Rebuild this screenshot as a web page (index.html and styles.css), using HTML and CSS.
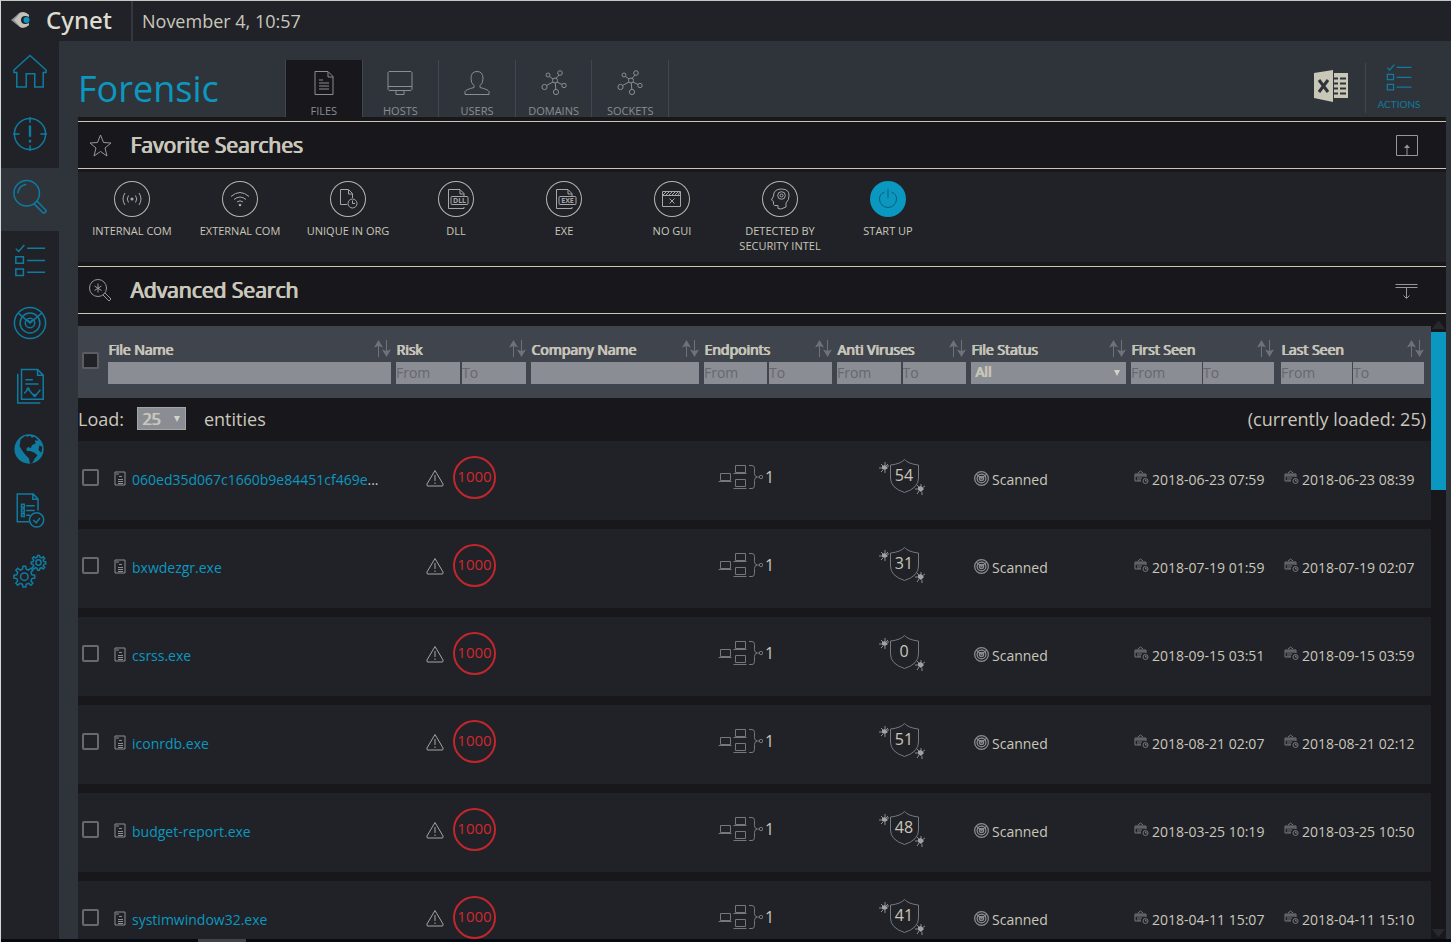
FILE: index.html
```html
<!DOCTYPE html>
<html lang="en">
<head>
<meta charset="utf-8">
<title>Cynet - Forensic</title>
<link rel="stylesheet" href="styles.css">
</head>
<body>
<svg class="defs" aria-hidden="true">
  <symbol id="file" viewBox="0 0 12 15"><path d="M1 1h10v13H1z"/><path d="M2 3h3M5 5.500h3M4 8.500h5M4 10.500h5M4 12.500h5"/></symbol>
  <symbol id="warn" viewBox="0 0 18 18"><path d="M9 1.500 17 15q.6 2-1 2H2q-1.600 0-1-2z"/><path d="M9 6v6M9 13.500v1.500"/></symbol>
  <symbol id="hosts" viewBox="0 0 46 26"><path d="M2.500 9.500h10v7h-10zM.5 17.500h13M17.500 1.500h10v7h-10zM15.500 9.500h13M17.500 15.500h10v7h-10zM15.500 24.500h13"/><path d="M31 1.500h3q2.500 0 2.500 3v5q0 3 2.500 3.500q-2.500.5-2.500 3.500v5q0 3-2.500 3h-3M39 13h2"/><circle cx="43" cy="13" r="1.700"/></symbol>
  <symbol id="shield" viewBox="0 0 46 38"><path d="M25.500 1.500q4 4.500 14 5.500v13q0 10-14 14.500q-14-4.500-14-14.500V7q10-1 14-5.500z"/><path class="bug" d="M3 8l3-1 3 3-3 2-3-1z"/><path class="legs" d="M0 10h3M2 6l2 2M6 4v3M9 6 7 8M2 14l2-2M6 15v-3M8 8h2"/><path class="bug" d="M39 29l3-1 3 3-3 3-3-2z"/><path class="legs" d="M36 31h3M38 27l2 2M42 26v3M46 28l-3 2M38 36l2-3M43 37v-3"/></symbol>
  <symbol id="radar" viewBox="0 0 36 36"><circle cx="18" cy="18" r="16.500"/><circle cx="18" cy="18" r="10.500"/><circle cx="18" cy="18" r="5"/><path d="M5.500 7.500 18 18 30.500 7.500M16 15l2 3 2-3"/></symbol>
  <symbol id="cal" viewBox="0 0 15 15"><path d="M1 4h11v3M1 4v7h6M1 6h11M4 3l2.500-2L9 3M3 8h5M3 10h4M2 5h9"/><circle cx="11.500" cy="11" r="2.500"/><path d="M11.500 9.500V11h1.500"/></symbol>
  <symbol id="sort" viewBox="0 0 17 17"><path d="M4.500 17V3M12.500 0v13"/><path class="head" d="M4.500 0 9 7.500 4.500 6 0 7.500zM12.500 17 8 9.500l4.500 1.500 4.500-1.500z"/></symbol>
  <symbol id="list" viewBox="0 0 36 36"><path d="M3 6l3 3 6-7M15 5.500h19M3 14.500h8v7H3zM15 18.500h19M3 27.500h8v7H3zM15 31h19"/></symbol>
  <symbol id="net" viewBox="0 0 26 26"><circle cx="14" cy="10.500" r="2.500"/><circle cx="7" cy="5" r="2"/><circle cx="19" cy="3" r="2.300"/><circle cx="3.500" cy="17" r="2.600"/><circle cx="15" cy="22" r="2.600"/><circle cx="23" cy="15.500" r="2.200"/><path d="m8.500 6.500 3.500 2.500M15 8.500 18 5M12 12l-6.500 3.500M14.300 13l.5 6.500M16 12l5 2.500"/></symbol>
</svg>

<div class="app">
  <header class="topbar">
    <div class="brand">
      <svg class="brand-mark" viewBox="0 0 20 18" aria-hidden="true"><path fill="#8f9091" d="M0 9Q5 5 8 2q5-3 10 2-5-1-8 1-3 4 0 8 3 2 8 1-4 4-9 2Q6 14 0 9z"/><path fill="#c3c1ba" d="M3 9q3-3 6-7 5-2 9 2v2q-4-2-7 0-2 3 0 6 3 2 7 0v2q-5 4-9 2-3-4-6-7z"/><circle cx="15.500" cy="9" r="3" fill="#0b98c0"/></svg>
      <span class="brand-name">Cynet</span>
    </div>
    <time class="clock">November 4, 10:57</time>
  </header>

  <div class="body">
    <nav class="sidebar" aria-label="Main">
      <a href="#" aria-label="Home"><svg viewBox="0 0 36 36"><path d="M1 17 18 1.500 35 17v2.500h-3V35h-9V21h-9v14H4V19.500H1z"/></svg></a>
      <a href="#" aria-label="Alerts"><svg viewBox="0 0 36 36"><circle cx="18" cy="18" r="16.500"/><path d="M18 0v6M18 30v6M0 18h7M29 18h7"/><path class="thick" d="M18 9v12M18 24v3"/></svg></a>
      <a href="#" class="active" aria-label="Forensic"><svg viewBox="0 0 36 36"><circle cx="14.500" cy="14" r="13.500"/><path d="M5 14q1-8 9-9.500M22 25l10 10q3 0 3-3L25 22"/></svg></a>
      <a href="#" aria-label="Tasks"><svg><use href="#list"/></svg></a>
      <a href="#" aria-label="Scan"><svg><use href="#radar"/></svg></a>
      <a href="#" aria-label="Reports"><svg viewBox="0 0 36 36"><path d="M9 .5h17l6 6V32H9zM26 .5v6h6M5 5v31h24M13 11.500h8M13 16h14M12 26l4-5 5 6 3 1 5-6"/><circle cx="16" cy="21" r="1"/><circle cx="23" cy="28" r="1"/></svg></a>
      <a href="#" class="compact" aria-label="Network"><svg viewBox="0 0 36 36"><circle class="fill" cx="17" cy="18" r="15.500"/><path class="land" d="M8 8l5-4 2 1 3-1 2 2 3-1 4 4-4 0 1 3-4 2-1 3-3-1-2 2 1 2 3 0 5 2 3 3-3 3-2 4-3 2-1-6-4-4-3-4-3-5zM28 14l3 2-1 6-3-3z"/></svg></a>
      <a href="#" class="compact" aria-label="Policies"><svg viewBox="0 0 36 36"><path d="M17 30.500H4.500V1h17l5 5.500v12M21 1.500v5h5M9 12h3v3H9zM9 17h3v3H9zM9 22h3v3H9zM14 13.500h9M14 18.500h9M14 23.500h4"/><circle cx="25" cy="28.500" r="7.500"/><path d="m21.500 28.500 3 3 4-5"/></svg></a>
      <a href="#" aria-label="Settings"><svg viewBox="0 0 36 36"><circle cx="12" cy="24" r="4"/><path d="M10.500 13h3l.5 3 2.500 1 2.500-2 2 2-2 2.500 1 2.500 3 .5v3l-3 .5-1 2.500 2 2.500-2 2-2.500-2-2.500 1-.5 3h-3l-.5-3-2.500-1L5 33l-2-2 2-2.500L4 26l-3-.5v-3l3-.5 1-2.500L3 17l2-2 2.500 2 2.500-1z"/><circle cx="27" cy="9" r="2.800"/><path d="M26 1.500h2l.5 2 1.800.7L32 3l1.500 1.500L32 6.500l.7 1.500 2 .5v2l-2 .5-.7 1.500 1.500 1.800L32 15.800l-1.800-1.300-1.700.7-.5 2h-2l-.5-2-1.700-.7-1.800 1.300-1.500-1.500 1.500-1.800-.7-1.500-2-.5v-2l2-.5.7-1.500-1.500-2L22 3l1.800 1.200 1.700-.7z"/></svg></a>
    </nav>

    <main class="content">
      <div class="page-head">
        <h1>Forensic</h1>
        <nav class="tabs" aria-label="Entity type">
          <a href="#" class="on"><svg viewBox="0 0 26 26"><path d="M4 1.500h13l5 5V24.500H4zM17 2v5h5M8 10h4M8 13h10M8 16h10M8 19h10"/></svg>FILES</a>
          <a href="#"><svg viewBox="0 0 26 26"><path d="M2 1.500h22l1 1v17l-1 1H2l-1-1v-17zM1 16.500h24M9 21v3.500h8V21"/></svg>HOSTS</a>
          <a href="#"><svg viewBox="0 0 26 26"><path d="M13 1.500q6 0 6 7 0 5-3 7v2q8 2 9 4v3H1v-3q1-2 9-4v-2q-3-2-3-7 0-7 6-7z"/></svg>USERS</a>
          <a href="#"><svg><use href="#net"/></svg>DOMAINS</a>
          <a href="#"><svg><use href="#net"/></svg>SOCKETS</a>
        </nav>
        <div class="head-tools">
          <button class="excel" aria-label="Export to Excel"><svg viewBox="0 0 34 34"><path fill="#c9c7b8" d="M0 4 19 1v32L0 29z"/><path fill="#c9c7b8" d="M20 4h14v25H20z"/><path stroke="#2f343b" stroke-width="2" d="M20 9.500h4M26 9.500h6M20 14.500h4M26 14.500h6M20 19.500h4M26 19.500h6M20 24.500h4M26 24.500h6"/><path stroke="#2f343b" stroke-width="3" d="m5 11 9 12M14 11 5 23"/></svg></button>
          <button class="actions"><svg><use href="#list"/></svg>ACTIONS</button>
        </div>
      </div>

      <div class="panel">
        <section>
          <div class="bar">
            <svg viewBox="0 0 23 23"><path d="m11.500 1 3 7.500 7.500.5-6 5 2 8-6.500-4.500L5 22l2-8-6-5 7.500-.5z"/></svg>
            <h2>Favorite Searches</h2>
            <button aria-label="Collapse favorites"><svg viewBox="0 0 23 23"><path d="M1.500 1.500h21v20h-21zM12 21v-9"/><path class="head" d="M12 10.500l3 3.500H9z"/></svg></button>
          </div>
          <div class="favorites">
            <button><span class="disc"><svg viewBox="0 0 36 36"><circle class="dot" cx="18" cy="18" r="1.500"/><path d="M14.500 14.500q-2.500 3.500 0 7M21.500 14.500q2.500 3.500 0 7M11 12q-4 6 0 12M25 12q4 6 0 12"/></svg></span>INTERNAL COM</button>
            <button><span class="disc"><svg viewBox="0 0 36 36"><path d="M9 15.500q9-8 18 0M12 18.500q6-5 12 0M15 21q3-2.500 6 0"/><circle class="dot" cx="18" cy="24" r="1.300"/></svg></span>EXTERNAL COM</button>
            <button><span class="disc"><svg viewBox="0 0 36 36"><path d="M17 23.500h-6.500v-15h8l4 4V17M18.500 9v4h4"/><circle cx="22.500" cy="22.500" r="4.500"/><path d="M22.500 19.500v3H25"/></svg></span>UNIQUE IN ORG</button>
            <button><span class="disc"><svg viewBox="0 0 36 36"><path d="M26 26v1.500H10.500v-19H22l4 4V15M22 9v4h4"/><rect x="13" y="15.500" width="17" height="8" rx="1"/><text x="21.500" y="22">DLL</text></svg></span>DLL</button>
            <button><span class="disc"><svg viewBox="0 0 36 36"><path d="M26 26v1.500H10.500v-19H22l4 4V15M22 9v4h4"/><rect x="13" y="15.500" width="17" height="8" rx="1"/><text x="21.500" y="22">EXE</text></svg></span>EXE</button>
            <button><span class="disc"><svg viewBox="0 0 36 36"><path d="M8.500 10.500h18v15h-18zM8.500 14.500h18M9 14l3-3M12 14l3-3M15 14l3-3M18 14l3-3M21 14l3-3M24 14l2-3M15.500 17.500l5 5M20.500 17.500l-5 5"/></svg></span>NO GUI</button>
            <button><span class="disc"><svg viewBox="0 0 36 36"><path d="M16 27.500v-3h-3.500q-1.500 0-1-4L9.500 19l2-4q0-7 8-7t7.500 7q0 4-3 7v4l-5 2z"/><circle cx="19.500" cy="14.500" r="3.800"/><circle cx="19.500" cy="14.500" r="1.500"/></svg></span>DETECTED BY SECURITY INTEL</button>
            <button class="selected"><span class="disc"><svg viewBox="0 0 36 36"><path d="M18 8v9M14.500 11q-5 2-5 7a8.500 8.500 0 0 0 17 0q0-5-5-7"/></svg></span>START UP</button>
          </div>
        </section>

        <section>
          <div class="bar">
            <svg viewBox="0 0 23 23"><circle cx="9" cy="9" r="8.500"/><path d="M9 4.500v9M5.500 7l7 4.500M12.500 7l-7 4.500M14 16l6 6 2-2-6-6"/></svg>
            <h2>Advanced Search</h2>
            <button aria-label="Expand advanced search"><svg viewBox="0 0 23 23"><path d="M.5 5.500h22M.5 8.500h22M11.500 9v10M8.500 16.500l3 3 3-3"/></svg></button>
          </div>
        </section>

        <div class="results">
          <div class="grid-wrap">
          <table>
            <colgroup><col class="c-check"><col class="c-name"><col class="c-risk"><col class="c-company"><col class="c-end"><col class="c-anti"><col class="c-status"><col class="c-date"><col class="c-date"></colgroup>
            <thead>
              <tr>
                <th class="check"><input type="checkbox" aria-label="Select all"></th>
                <th><div class="label">File Name<svg><use href="#sort"/></svg></div><div class="filter"><input aria-label="File Name"></div></th>
                <th><div class="label">Risk<svg><use href="#sort"/></svg></div><div class="filter"><input placeholder="From" aria-label="Risk from"><input placeholder="To" aria-label="Risk to"></div></th>
                <th><div class="label">Company Name<svg><use href="#sort"/></svg></div><div class="filter"><input aria-label="Company Name"></div></th>
                <th><div class="label">Endpoints<svg><use href="#sort"/></svg></div><div class="filter"><input placeholder="From" aria-label="Endpoints from"><input placeholder="To" aria-label="Endpoints to"></div></th>
                <th><div class="label">Anti Viruses<svg><use href="#sort"/></svg></div><div class="filter"><input placeholder="From" aria-label="Anti Viruses from"><input placeholder="To" aria-label="Anti Viruses to"></div></th>
                <th><div class="label">File Status<svg><use href="#sort"/></svg></div><div class="filter pick"><select aria-label="File Status"><option>All</option></select></div></th>
                <th class="date"><div class="label">First Seen<svg><use href="#sort"/></svg></div><div class="filter"><input placeholder="From" aria-label="First Seen from"><input placeholder="To" aria-label="First Seen to"></div></th>
                <th class="date"><div class="label">Last Seen<svg><use href="#sort"/></svg></div><div class="filter"><input placeholder="From" aria-label="Last Seen from"><input placeholder="To" aria-label="Last Seen to"></div></th>
              </tr>
              <tr class="load">
                <td colspan="9"><div class="load-row"><label for="count">Load:</label><span class="pick"><select id="count"><option>25</option></select></span><span>entities</span><span class="loaded">(currently loaded: 25)</span></div></td>
              </tr>
            </thead>
            <tbody>
              <tr><td class="check"><input type="checkbox" aria-label="Select row"></td><td class="text name"><div class="item"><svg class="i-file"><use href="#file"/></svg><span><a href="#">060ed35d067c1660b9e84451cf469e</a>...</span></div></td><td><div class="risk"><svg><use href="#warn"/></svg><span>1000</span></div></td><td></td><td class="lift"><div class="hosts"><svg><use href="#hosts"/></svg>1</div></td><td class="lift"><div class="shield"><svg><use href="#shield"/></svg><span>54</span></div></td><td class="text"><div class="item"><svg class="i-radar"><use href="#radar"/></svg>Scanned</div></td><td class="text"><div class="item"><svg class="i-cal"><use href="#cal"/></svg>2018-06-23 07:59</div></td><td class="text"><div class="item"><svg class="i-cal"><use href="#cal"/></svg>2018-06-23 08:39</div></td></tr>
              <tr><td class="check"><input type="checkbox" aria-label="Select row"></td><td class="text name"><div class="item"><svg class="i-file"><use href="#file"/></svg><a href="#">bxwdezgr.exe</a></div></td><td><div class="risk"><svg><use href="#warn"/></svg><span>1000</span></div></td><td></td><td class="lift"><div class="hosts"><svg><use href="#hosts"/></svg>1</div></td><td class="lift"><div class="shield"><svg><use href="#shield"/></svg><span>31</span></div></td><td class="text"><div class="item"><svg class="i-radar"><use href="#radar"/></svg>Scanned</div></td><td class="text"><div class="item"><svg class="i-cal"><use href="#cal"/></svg>2018-07-19 01:59</div></td><td class="text"><div class="item"><svg class="i-cal"><use href="#cal"/></svg>2018-07-19 02:07</div></td></tr>
              <tr><td class="check"><input type="checkbox" aria-label="Select row"></td><td class="text name"><div class="item"><svg class="i-file"><use href="#file"/></svg><a href="#">csrss.exe</a></div></td><td><div class="risk"><svg><use href="#warn"/></svg><span>1000</span></div></td><td></td><td class="lift"><div class="hosts"><svg><use href="#hosts"/></svg>1</div></td><td class="lift"><div class="shield"><svg><use href="#shield"/></svg><span>0</span></div></td><td class="text"><div class="item"><svg class="i-radar"><use href="#radar"/></svg>Scanned</div></td><td class="text"><div class="item"><svg class="i-cal"><use href="#cal"/></svg>2018-09-15 03:51</div></td><td class="text"><div class="item"><svg class="i-cal"><use href="#cal"/></svg>2018-09-15 03:59</div></td></tr>
              <tr><td class="check"><input type="checkbox" aria-label="Select row"></td><td class="text name"><div class="item"><svg class="i-file"><use href="#file"/></svg><a href="#">iconrdb.exe</a></div></td><td><div class="risk"><svg><use href="#warn"/></svg><span>1000</span></div></td><td></td><td class="lift"><div class="hosts"><svg><use href="#hosts"/></svg>1</div></td><td class="lift"><div class="shield"><svg><use href="#shield"/></svg><span>51</span></div></td><td class="text"><div class="item"><svg class="i-radar"><use href="#radar"/></svg>Scanned</div></td><td class="text"><div class="item"><svg class="i-cal"><use href="#cal"/></svg>2018-08-21 02:07</div></td><td class="text"><div class="item"><svg class="i-cal"><use href="#cal"/></svg>2018-08-21 02:12</div></td></tr>
              <tr><td class="check"><input type="checkbox" aria-label="Select row"></td><td class="text name"><div class="item"><svg class="i-file"><use href="#file"/></svg><a href="#">budget-report.exe</a></div></td><td><div class="risk"><svg><use href="#warn"/></svg><span>1000</span></div></td><td></td><td class="lift"><div class="hosts"><svg><use href="#hosts"/></svg>1</div></td><td class="lift"><div class="shield"><svg><use href="#shield"/></svg><span>48</span></div></td><td class="text"><div class="item"><svg class="i-radar"><use href="#radar"/></svg>Scanned</div></td><td class="text"><div class="item"><svg class="i-cal"><use href="#cal"/></svg>2018-03-25 10:19</div></td><td class="text"><div class="item"><svg class="i-cal"><use href="#cal"/></svg>2018-03-25 10:50</div></td></tr>
              <tr><td class="check"><input type="checkbox" aria-label="Select row"></td><td class="text name"><div class="item"><svg class="i-file"><use href="#file"/></svg><a href="#">systimwindow32.exe</a></div></td><td><div class="risk"><svg><use href="#warn"/></svg><span>1000</span></div></td><td></td><td class="lift"><div class="hosts"><svg><use href="#hosts"/></svg>1</div></td><td class="lift"><div class="shield"><svg><use href="#shield"/></svg><span>41</span></div></td><td class="text"><div class="item"><svg class="i-radar"><use href="#radar"/></svg>Scanned</div></td><td class="text"><div class="item"><svg class="i-cal"><use href="#cal"/></svg>2018-04-11 15:07</div></td><td class="text"><div class="item"><svg class="i-cal"><use href="#cal"/></svg>2018-04-11 15:10</div></td></tr>
            </tbody>
          </table>
          </div>
          <div class="scroll" aria-hidden="true"><i class="up"></i><i class="thumb"></i><i class="down"></i></div>
        </div>
      </div>
    </main>
  </div>
  <div class="dock"><i></i></div>
</div>
</body>
</html>
```

FILE: styles.css
```css
:root {
  --bg: #2f343b;
  --surface: #212227;
  --dark: #18171c;
  --text: #c9c7bb;
  --line: #c9c5b0;
  --blue: #0b98c0;
  --blue-dim: #0f7ba0;
  --gray: #8a8d92;
  --field: #8a8d94;
}
* { box-sizing: border-box; }
body {
  margin: 0;
  background: var(--bg);
  color: var(--text);
  font: 14px/20px "Open Sans", "Noto Sans", sans-serif;
}
a { color: inherit; text-decoration: none; }
button {
  padding: 0;
  border: 0;
  background: none;
  color: inherit;
  font: inherit;
}
svg { display: block; flex: none; fill: none; stroke: currentColor; overflow: visible; }
.defs { position: absolute; width: 0; height: 0; }

.app {
  display: flex;
  flex-direction: column;
  height: 100vh;
  overflow: hidden;
  border-top: 1px solid #c5c8c2;
  border-left: 1px solid #d5d8d8;
}
.topbar {
  display: flex;
  flex: none;
  height: 40px;
  align-items: stretch;
  background: var(--surface);
}
.brand {
  display: flex;
  align-items: center;
  gap: 15px;
  width: 132px;
  padding: 0 0 2px 10px;
  border-right: 2px solid #343940;
}
.brand-mark { width: 20px; height: 18px; stroke: none; }
.brand-name { color: #dddbd2; font: 500 24px/36px "Noto Sans", sans-serif; }
.clock { padding-left: 9px; font-size: 18px; line-height: 40px; }

.body { display: flex; flex: 1; min-height: 0; }
.sidebar {
  display: flex;
  flex: none;
  flex-direction: column;
  width: 58px;
  padding-top: 1px;
  background: var(--surface);
  color: var(--blue-dim);
}
.sidebar a {
  display: flex;
  justify-content: center;
  height: 63px;
  padding-top: 12px;
}
.sidebar a.active { background: var(--bg); }
.sidebar a.compact { height: 61px; }
.sidebar svg { width: 34px; height: 34px; stroke-width: 1.6; }
.sidebar .thick { stroke-width: 2.5; }
.sidebar .fill { fill: currentColor; stroke: none; }
.sidebar .land { fill: var(--surface); stroke: none; }

.content {
  display: flex;
  flex: 1;
  flex-direction: column;
  min-width: 0;
  padding: 0 5px 0 19px;
}
.page-head { display: flex; flex: none; height: 76px; align-items: flex-end; }
h1 {
  width: 207px;
  margin: 0;
  color: var(--blue);
  font-size: 36px;
  font-weight: 400;
  line-height: 56px;
}
.tabs {
  display: grid;
  grid-template-columns: repeat(5, 1fr);
  width: 384px;
  height: 57px;
  border-left: 1px solid #42474f;
  color: var(--gray);
}
.tabs a {
  display: flex;
  flex-direction: column;
  align-items: center;
  gap: 7px;
  padding-top: 10px;
  border-right: 1px solid #42474f;
  font-size: 11px;
  line-height: 15px;
}
.tabs a.on { background: var(--dark); }
.tabs svg { width: 26px; height: 26px; }
.head-tools { display: flex; align-items: center; margin-left: auto; padding-bottom: 4px; }
.excel { padding: 0 17px 4px 0; }
.excel svg { width: 34px; height: 34px; stroke: none; }
.actions {
  display: flex;
  flex-direction: column;
  align-items: center;
  gap: 7px;
  width: 81px;
  height: 50px;
  padding-right: 14px;
  border-left: 1px solid #42474f;
  color: var(--blue-dim);
  font: 10px/12px Lato, sans-serif;
}
.actions svg { width: 28px; height: 28px; stroke-width: 1.6; }

.panel {
  display: flex;
  flex: 1;
  flex-direction: column;
  min-height: 0;
  padding-top: 4px;
  background: var(--dark);
}
.bar {
  display: flex;
  align-items: center;
  gap: 18px;
  height: 48px;
  padding: 0 28px 0 11px;
  border-top: 1px solid var(--line);
  border-bottom: 1px solid var(--line);
}
.bar svg { width: 23px; height: 23px; color: #96979a; }
h2 {
  margin: 0;
  font-size: 21px;
  font-weight: 400;
  line-height: 30px;
  text-shadow: 1px 0 currentColor, 1px 0 currentColor;
}
.bar button { margin-left: auto; }
.favorites {
  display: flex;
  height: 90px;
  margin: 3px 0 4px;
  padding-top: 9px;
  background: var(--surface);
}
.favorites button {
  display: flex;
  flex-direction: column;
  align-items: center;
  width: 108px;
  padding: 0 12px;
  font-size: 11px;
  line-height: 15px;
}
.disc {
  width: 36px;
  height: 36px;
  margin-bottom: 6px;
  border-radius: 50%;
  box-shadow: inset 0 0 0 1px #b5b5af;
  color: #a5a7a8;
}
.disc svg { width: 36px; height: 36px; }
.disc .dot { fill: currentColor; stroke: none; }
.disc text { fill: currentColor; stroke: none; font: 700 7px "Open Sans", sans-serif; text-anchor: middle; }
.selected .disc { background: var(--blue); box-shadow: none; color: #0a5f7c; }

.results { display: flex; flex: 1; min-height: 0; }
.grid-wrap { flex: 1; min-width: 0; padding-top: 12px; overflow: hidden; }
table { width: 100%; table-layout: fixed; border-collapse: separate; border-spacing: 0; }
.c-check { width: 30px; }
.c-name { width: 288px; }
.c-risk { width: 135px; }
.c-company { width: 173px; }
.c-end { width: 133px; }
.c-anti { width: 134px; }
.c-status { width: 160px; }
.c-date { width: 150px; }
th {
  height: 72px;
  padding: 0 5px 2px 0;
  background: #3f444d;
  font-weight: 400;
  text-align: left;
}
th.date { padding-right: 7px; }
th.check, td.check { padding-left: 4px; padding-right: 0; }
.label {
  display: flex;
  justify-content: space-between;
  height: 24px;
  line-height: 24px;
  text-shadow: 1px 0 currentColor, 1px 0 currentColor;
}
.label svg { width: 17px; height: 17px; margin-top: 2px; color: #6f7278; }
.head { fill: currentColor; stroke: none; }
.filter { display: flex; gap: 2px; }
.date .filter { gap: 1px; }
.filter input, .filter select {
  flex: 1;
  min-width: 0;
  width: 0;
  height: 22px;
  padding: 0 0 2px;
  border: 0;
  border-radius: 0;
  background: var(--field);
  color: var(--text);
  font: 14px/20px "Open Sans", sans-serif;
}
.filter input::placeholder { color: #66686c; opacity: 1; }
.pick { position: relative; }
.pick select { appearance: none; text-shadow: 1px 0 currentColor, 1px 0 currentColor; }
.filter select { padding-left: 4px; }
.pick::after {
  content: "";
  position: absolute;
  top: 50%;
  right: 6px;
  margin-top: -3px;
  border: 3px solid transparent;
  border-top: 6px solid #d5d3c8;
  border-bottom: 0;
}
input[type="checkbox"] {
  display: block;
  appearance: none;
  width: 17px;
  height: 17px;
  margin: 0;
  border: 2px solid #66696e;
  border-radius: 2px;
  background: var(--surface);
}
th input[type="checkbox"] { border-color: #5b5d62; }
th.check { padding-bottom: 4px; }
.load td { height: 43px; padding: 0 5px 2px 0; border: 0; background: none; }
.load-row { display: flex; align-items: center; font-size: 18px; line-height: 24px; }
.load-row .pick { margin: 0 18px 0 13px; }
.load-row select {
  display: block;
  width: 49px;
  height: 23px;
  padding: 0 4px;
  border: 1px solid #a3a5a3;
  border-radius: 0;
  background: var(--field);
  color: var(--text);
  font: 16px/20px "Open Sans", sans-serif;
}
.loaded { margin-left: auto; }

td {
  height: 88px;
  padding: 0 5px 6px 0;
  border-bottom: 9px solid var(--dark);
  background: var(--surface);
}
td.lift { padding-bottom: 8px; }
td.text { padding: 0 0 2px 3px; }
td.name { padding-left: 6px; }
.item { display: flex; align-items: center; gap: 3px; white-space: nowrap; }
.name .item { gap: 6px; }
.item a { color: var(--blue); }
.item svg { margin-bottom: 2px; color: var(--gray); }
.i-file { width: 12px; height: 15px; }
.i-radar { width: 15px; height: 15px; stroke-width: 3; }
.item .i-cal { width: 15px; height: 15px; margin-bottom: 4px; color: #74777b; }
.item svg + * { flex: none; }
.risk { display: flex; align-items: center; justify-content: center; gap: 9px; }
.risk svg { width: 18px; height: 18px; color: #a5a5a3; }
.risk span {
  width: 43px;
  height: 43px;
  border: 2px solid #c0272d;
  border-radius: 50%;
  color: #d0282e;
  font-size: 15px;
  line-height: 37px;
  text-align: center;
}
.hosts { display: flex; align-items: center; gap: 1px; padding-left: 14px; font-size: 16px; }
.hosts svg { width: 46px; height: 26px; color: #74777b; }
.shield { display: grid; justify-content: center; font-size: 16px; line-height: 34px; text-align: center; }
.shield svg, .shield span { grid-area: 1 / 1; }
.shield svg { width: 46px; height: 38px; color: #74777b; }
.shield span { padding-left: 5px; }
.bug { fill: #a0a2a4; stroke: none; }
.legs { stroke: #8a8d90; }

.scroll { display: flex; flex: none; flex-direction: column; width: 15px; padding-top: 7px; }
.scroll .up, .scroll .down { margin: 0 1px; border: 6px solid transparent; }
.scroll .up { border-top: 0; border-bottom: 8px solid #28292d; }
.scroll .down { margin-top: auto; margin-bottom: 2px; border-top: 8px solid #28292d; border-bottom: 0; }
.scroll .thumb { height: 158px; margin-top: 3px; background: var(--blue); }
.dock { flex: none; height: 3px; padding-left: 197px; background: #050a12; }
.dock i { display: block; width: 48px; height: 3px; background: #3f4349; }
```
